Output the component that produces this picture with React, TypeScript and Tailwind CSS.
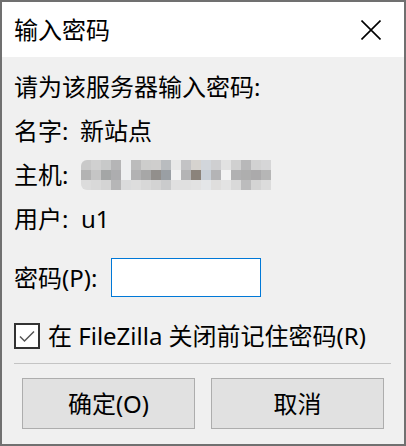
const mosaic = [
  ["#c9c9c9", "#d0d0d0", "#c8c9c9", "#b5b5b6", "#eeeff0", "#bcbcbc", "#cdcdcc", "#cfcecd", "#b9bcbf", "#e8e8e8", "#c3c3c5", "#d6d3cf", "#d2d6db", "#cfcfd1", "#e2e2e2", "#d0d0d0", "#b8b8b9", "#d2d2d2", "#d6d6d7"],
  ["#b3b3b3", "#c5c5c5", "#a4a6a6", "#adadaf", "#eef0f1", "#b2b2b3", "#a7a7a7", "#928f8c", "#9a9fa4", "#f2f2f2", "#b4b4b5", "#8b837b", "#c9d0d8", "#b4b4b6", "#f3f3f3", "#b1b1b2", "#aeaeae", "#abaaab", "#b6b6b6"],
  ["#dcdcdc", "#d9d9d9", "#d4d4d4", "#b6b6b7", "#dadbdc", "#dddddd", "#d8d8d8", "#d3d3d3", "#cacbcc", "#e0e0e0", "#e0e0e0", "#e2e2e2", "#e4e6e8", "#dfdedd", "#e3e3e3", "#d9d9d9", "#bcbcbd", "#d4d4d4", "#dcdcdc"],
];

// blurred host name, drawn as a pixel mosaic
const HostMosaic = () => (
  <div className="overflow-hidden rounded-l-[6px]">
    <svg width={190} height={30} viewBox="0 0 190 30" className="block">
      {mosaic.map((row, r) =>
        row.map((c, i) => <rect key={`${r}-${i}`} x={i * 10} y={r * 10} width={10} height={10} fill={c} />)
      )}
    </svg>
  </div>
);

const App = () => {
  return (
    <div
      className="w-[406px] h-[446px] flex flex-col border-2 border-[#707070] bg-[#f0f0f0] text-black text-[24px]"
      style={{ fontFamily: '"Noto Sans", "Noto Sans CJK SC", sans-serif' }}
    >
      {/* Title bar */}
      <div className="h-[55px] bg-white flex items-center justify-between pl-[12px] pr-[23px]">
        <span className="leading-none">输入密码</span>
        <svg width={20} height={20} viewBox="0 0 20 20">
          <path d="M0.5 0.5 L19.5 19.5 M19.5 0.5 L0.5 19.5" stroke="#000" strokeWidth={1.6} />
        </svg>
      </div>

      {/* Body */}
      <div className="flex-1 flex flex-col px-[12px] pt-[8px]">
        <div className="leading-[44px]">请为该服务器输入密码:</div>
        <div className="flex items-center h-[44px]">
          <span className="w-[66px]">名字:</span>
          <span>新站点</span>
        </div>
        <div className="flex items-center h-[44px]">
          <span className="w-[67px]">主机:</span>
          <HostMosaic />
        </div>
        <div className="flex items-center h-[44px]">
          <span className="w-[67px]">用户:</span>
          <span>u1</span>
        </div>

        <div className="flex items-center mt-[17px]">
          <span className="w-[97px]">密码(P):</span>
          <input
            type="password"
            className="w-[150px] h-[39px] bg-white border border-[#0078d7] outline-none"
          />
        </div>

        <label className="flex items-center mt-[26px]">
          <span className="w-[26px] h-[26px] border-2 border-[#333333] bg-white flex items-center justify-center">
            <svg width={20} height={20} viewBox="0 0 20 20">
              <path d="M3 10.5 L7.5 15 L17 5.5" fill="none" stroke="#555555" strokeWidth={1.5} />
            </svg>
          </span>
          <span className="ml-[8px] leading-none">在 FileZilla 关闭前记住密码(R)</span>
        </label>

        <div className="mt-[14px] h-px bg-[#c4c4c4] mr-[1px]" />

        <div className="flex gap-[16px] mt-[14px] px-[8px]">
          <button className="w-[173px] h-[51px] bg-[#e1e1e1] border border-[#adadad]">确定(O)</button>
          <button className="w-[173px] h-[51px] bg-[#e1e1e1] border border-[#adadad]">取消</button>
        </div>
      </div>
    </div>
  );
};

export default App;
